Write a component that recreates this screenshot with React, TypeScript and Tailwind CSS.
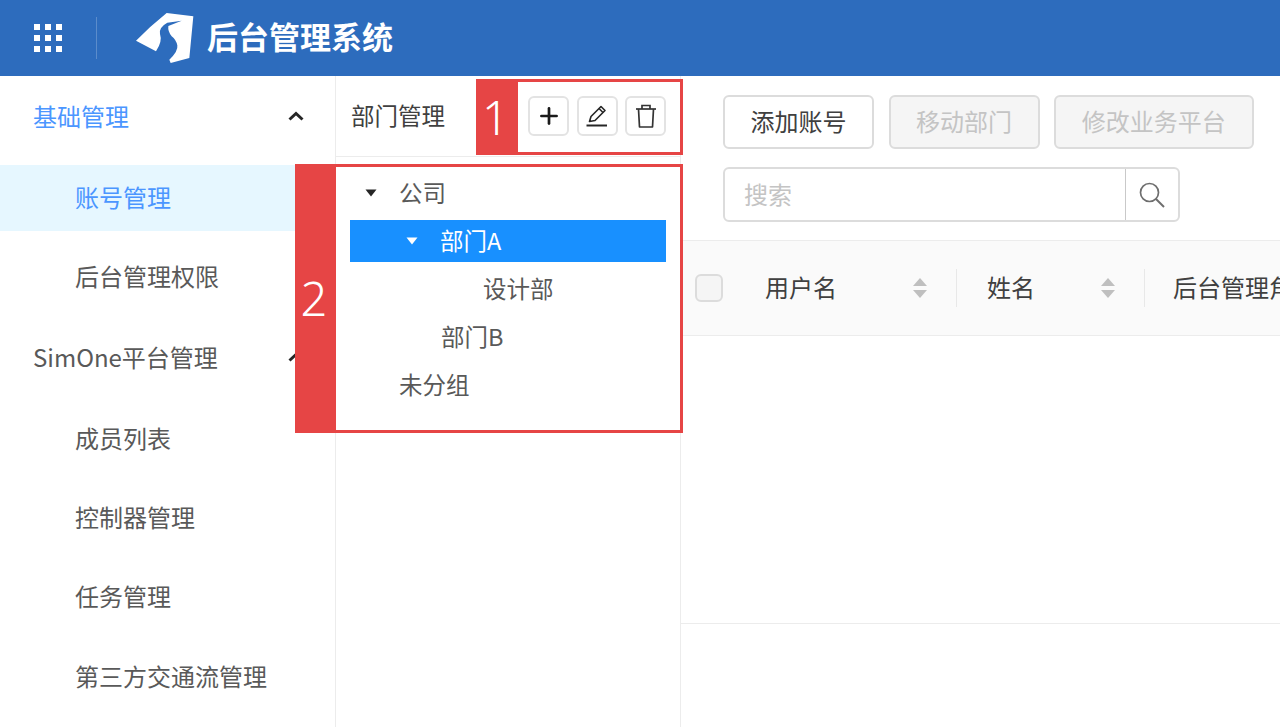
import React from "react";
import { Plus } from "lucide-react";

const font = { fontFamily: '"Noto Sans CJK SC", "Noto Sans", sans-serif' };

function Grid() {
  return (
    <svg width="28" height="28" viewBox="0 0 28 28" fill="#fff">
      {[0, 11, 22].map((y) =>
        [0, 11, 22].map((x) => <rect key={`${x}-${y}`} x={x} y={y} width="6" height="6" />)
      )}
    </svg>
  );
}

function Logo() {
  return (
    <svg width="70" height="60" viewBox="0 0 210 180" fill="#fff">
      <path
        d="M18 98 Q60 55 110 15 L190 25 L178 150 L122 165 L118 155 Q145 130 142 112 Q138 95 125 85 Q113 70 115 54 L155 38 L112 44 Q86 58 90 78 Q98 100 78 130 Z"
        strokeLinejoin="round"
      />
    </svg>
  );
}

function PencilLine() {
  return (
    <svg width="24" height="24" viewBox="0 0 24 24" fill="none" stroke="#262626" strokeWidth="1.6">
      <path d="M4.5 17.5 L6 12.5 L16 2.5 L20 6.5 L10 16.5 Z" strokeLinejoin="round" />
      <path d="M14 4.5 L18 8.5" />
      <path d="M1.5 21.5 H22" strokeWidth="2" />
    </svg>
  );
}

function TrashIcon() {
  return (
    <svg width="24" height="26" viewBox="0 0 24 26" fill="none" stroke="#333" strokeWidth="1.7">
      <path d="M2 6 H22" />
      <path d="M8 6 V2.5 H16 V6" />
      <path d="M4.5 6 L5.5 24 H18.5 L19.5 6" strokeLinejoin="round" />
    </svg>
  );
}

function SearchIcon() {
  return (
    <svg width="26" height="26" viewBox="0 0 26 26" fill="none" stroke="#6e6e6e" strokeWidth="1.7">
      <circle cx="10.5" cy="10.5" r="9" />
      <path d="M17 17 L25 25" strokeWidth="2" />
    </svg>
  );
}

function Caret({ color }: { color: string }) {
  return (
    <svg width="12" height="8" viewBox="0 0 12 8">
      <path d="M0.5 0.5 H11.5 L6 7.5 Z" fill={color} />
    </svg>
  );
}

function Sort() {
  return (
    <svg width="14" height="22" viewBox="0 0 14 22" fill="#bfbfbf">
      <path d="M7 1 L14 9 H0 Z" />
      <path d="M0 13 H14 L7 21 Z" />
    </svg>
  );
}

function Chevron() {
  return (
    <svg width="16" height="10" viewBox="0 0 16 10" fill="none" stroke="#262626" strokeWidth="3">
      <path d="M1.5 8.5 L8 2.5 L14.5 8.5" />
    </svg>
  );
}

function SideRow({
  label,
  active,
  open,
  sub,
  blue,
  className = "",
}: {
  label: string;
  active?: boolean;
  open?: boolean;
  sub?: boolean;
  blue?: boolean;
  className?: string;
}) {
  return (
    <div
      className={`flex h-[66px] items-center justify-between pb-[2px] pr-[31px] text-[24px] ${sub ? "pl-[75px]" : "pl-[33px]"} ${
        active ? "bg-[#e6f7ff]" : ""
      } ${active || blue ? "text-[#4b96ff]" : "text-[#595959]"} ${className}`}
    >
      <span>{label}</span>
      {open && <Chevron />}
    </div>
  );
}

function IconBtn({ children }: { children: React.ReactNode }) {
  return (
    <button className="flex h-[40px] w-[41px] items-center justify-center rounded-[6px] border-2 border-[#e3e3e3] bg-white">
      {children}
    </button>
  );
}

function ActionBtn({ label, disabled, w }: { label: string; disabled?: boolean; w: string }) {
  return (
    <button
      className={`flex h-[54px] items-center justify-center rounded-[6px] border-2 border-[#dcdcdc] pb-[3px] text-[24px] ${w} ${
        disabled ? "bg-[#f5f5f5] text-[#c4c4c4]" : "bg-white text-[#404040]"
      }`}
    >
      {label}
    </button>
  );
}

export default function App() {
  return (
    <div className="relative h-[727px] w-[1280px] overflow-hidden bg-white" style={font}>
      <header className="flex h-[76px] items-center bg-[#2d6cbd]">
        <div className="ml-[34px]">
          <Grid />
        </div>
        <div className="ml-[34px] h-[42px] w-px bg-[#5b8ccb]" />
        <div className="ml-[33px]">
          <Logo />
        </div>
        <div className="ml-[7px] pb-[3px] text-[31px] font-bold text-white">后台管理系统</div>
      </header>

      <div className="flex h-[651px]">
        <aside className="w-[336px] shrink-0 border-r border-[#ececec] pt-[8px]">
          <div className="flex flex-col">
            <SideRow label="基础管理" open blue />
            <SideRow label="账号管理" sub active className="mt-[15px]" />
            <SideRow label="后台管理权限" sub className="mt-[13px]" />
            <SideRow label="SimOne平台管理" open className="mt-[15px]" />
            <SideRow label="成员列表" sub className="mt-[15px]" />
            <SideRow label="控制器管理" sub className="mt-[13px]" />
            <SideRow label="任务管理" sub className="mt-[13px]" />
            <SideRow label="第三方交通流管理" sub className="mt-[14px]" />
          </div>
        </aside>

        <section className="w-[345px] shrink-0 border-r border-[#ececec]">
          <div className="flex h-[81px] items-center justify-between border-b border-[#ececec] pl-[15px] pr-[14px]">
            <span className="pb-[1px] text-[23.5px] text-[#404040]">部门管理</span>
            <div className="flex gap-[7.5px]">
              <IconBtn>
                <Plus size={26} color="#1a1a1a" strokeWidth={2.5} />
              </IconBtn>
              <IconBtn>
                <PencilLine />
              </IconBtn>
              <IconBtn>
                <TrashIcon />
              </IconBtn>
            </div>
          </div>
          <div className="pl-[14px] pr-[14px] pt-[12px] text-[23.5px] text-[#595959]">
            <div className="flex h-[48px] items-center pl-[15px]">
              <Caret color="#262626" />
              <span className="ml-[22px]">公司</span>
            </div>
            <div className="flex h-[48px] items-center">
              <div className="flex h-[42px] w-full items-center bg-[#1890ff] pl-[56px] text-white">
                <Caret color="#ffffff" />
                <span className="ml-[22px]">部门A</span>
              </div>
            </div>
            <div className="flex h-[48px] items-center pl-[133px]">设计部</div>
            <div className="flex h-[48px] items-center pl-[91px]">部门B</div>
            <div className="flex h-[48px] items-center pl-[49px]">未分组</div>
          </div>
        </section>

        <main className="min-w-0 flex-1">
          <div className="flex gap-[14.5px] pl-[42px] pt-[19px]">
            <ActionBtn label="添加账号" w="w-[151px]" />
            <ActionBtn label="移动部门" disabled w="w-[151px]" />
            <ActionBtn label="修改业务平台" disabled w="w-[199.5px]" />
          </div>
          <div className="ml-[42px] mt-[18px] flex h-[55px] w-[457px] rounded-[6px] border-2 border-[#dcdcdc]">
            <div className="flex flex-1 items-center pb-[2px] pl-[19px] text-[24px] text-[#c4c4c4]">搜索</div>
            <div className="flex w-[53px] items-center justify-center border-l border-[#c9c9c9]">
              <SearchIcon />
            </div>
          </div>
          <div className="mt-[18px] flex h-[96px] items-center overflow-hidden border-y border-[#ececec] bg-[#fafafa] text-[24px] text-[#404040]">
            <div className="ml-[14px] h-[28px] w-[28px] shrink-0 rounded-[6px] border-2 border-[#dcdcdc] bg-[#f5f5f5]" />
            <div className="ml-[42px] w-[148px] shrink-0 pb-[2px]">用户名</div>
            <div className="shrink-0">
              <Sort />
            </div>
            <div className="ml-[29px] h-[38px] w-px shrink-0 bg-[#e8e8e8]" />
            <div className="ml-[30px] w-[114px] shrink-0 pb-[2px]">姓名</div>
            <div className="shrink-0">
              <Sort />
            </div>
            <div className="ml-[29px] h-[38px] w-px shrink-0 bg-[#e8e8e8]" />
            <div className="ml-[28px] shrink-0 whitespace-nowrap pb-[2px]">后台管理角色</div>
          </div>
          <div className="mt-[287px] h-px bg-[#ececec]" />
        </main>
      </div>

      <div className="absolute left-[476px] top-[79px] flex h-[76px] w-[207px] border-[3px] border-[#e64545]">
        <div
          className="flex w-[39px] items-center justify-center bg-[#e64545] pr-[6px] text-[47px] font-light text-white"
          style={{ fontFamily: '"Noto Sans", sans-serif' }}
        >
          1
        </div>
      </div>
      <div className="absolute left-[295px] top-[164px] flex h-[269px] w-[388px] border-[3px] border-[#e64545]">
        <div
          className="flex w-[38px] items-center justify-center bg-[#e64545] pr-[6px] text-[47px] font-light text-white"
          style={{ fontFamily: '"Noto Sans", sans-serif' }}
        >
          2
        </div>
      </div>
    </div>
  );
}
